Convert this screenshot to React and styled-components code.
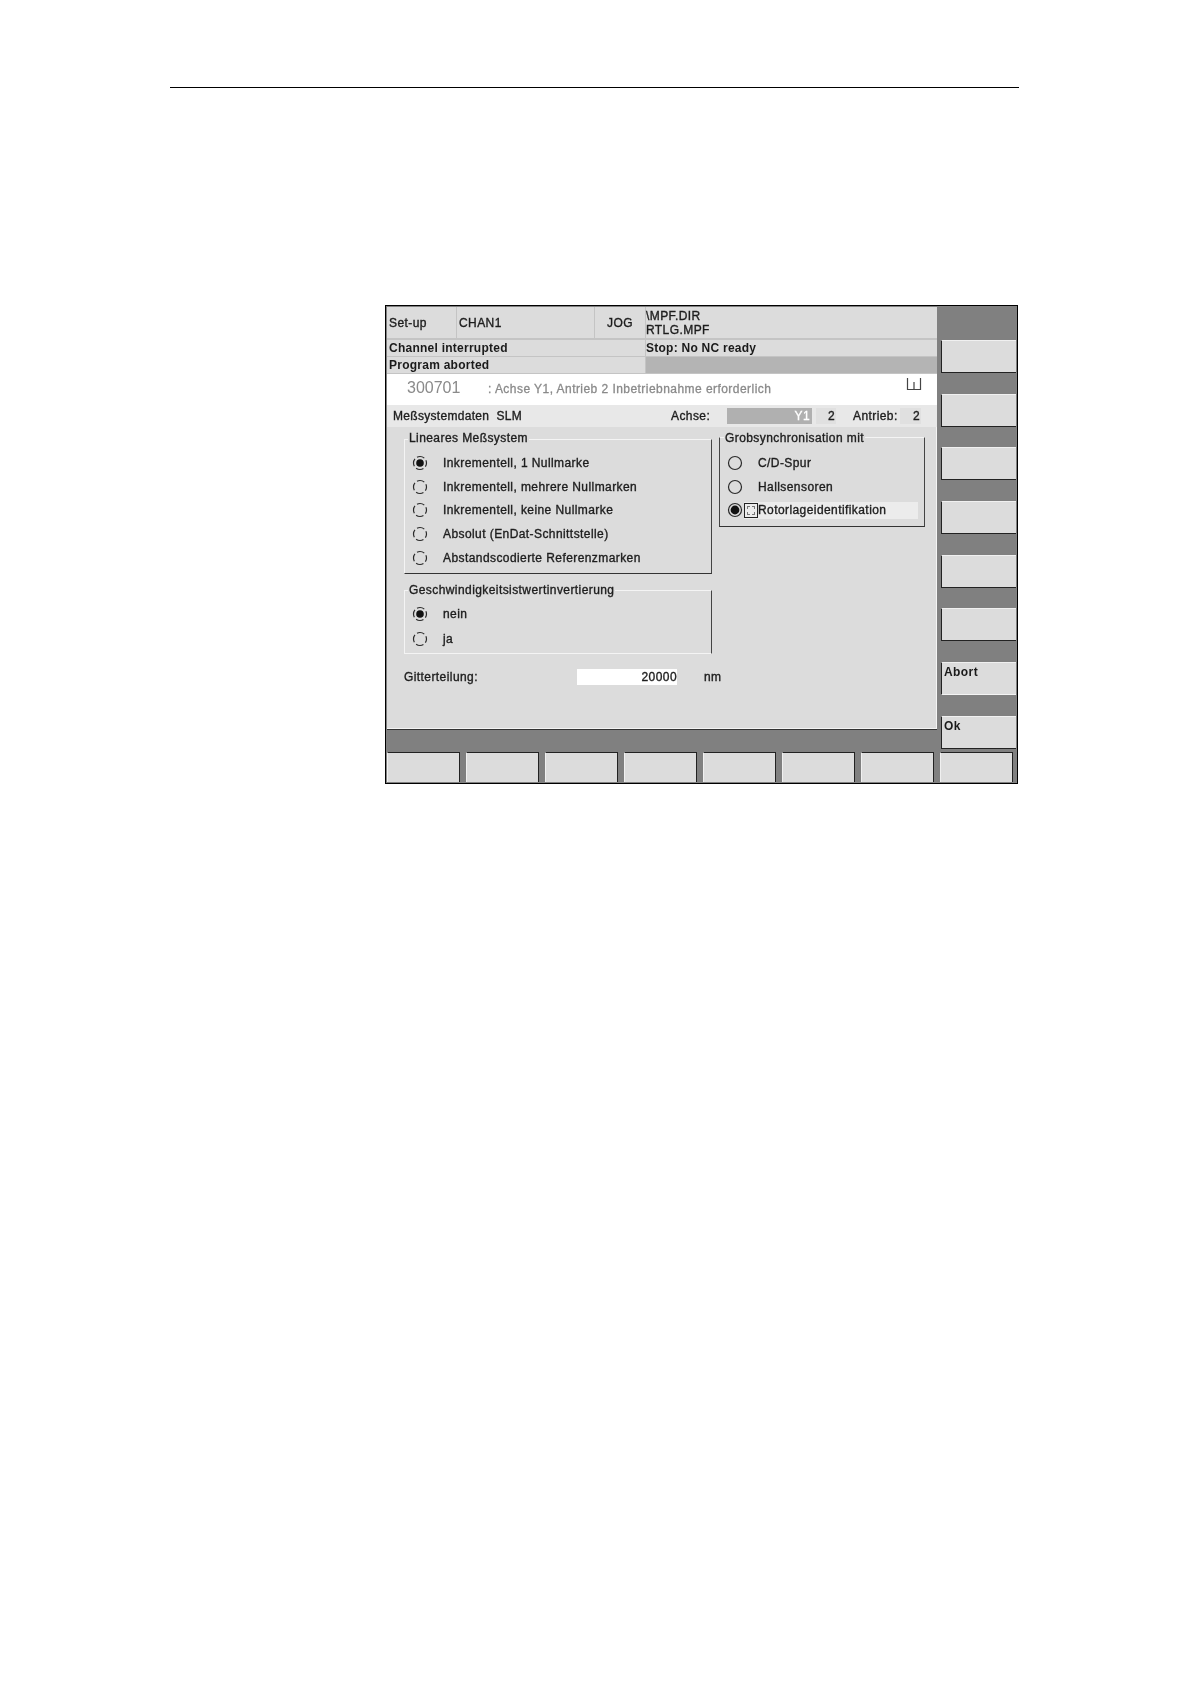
import styled, { createGlobalStyle } from "styled-components";

const Global = createGlobalStyle`
  html, body {
    margin: 0;
    background: #fff;
  }
  body {
    font-family: "Liberation Sans", Arial, sans-serif;
    font-size: 12px;
    color: #1a1a1a;
  }
`;

const Page = styled.div`
  width: 1190px;
  height: 1684px;
  padding: 87px 0 0 170px;
  box-sizing: border-box;
`;

const Rule = styled.div`
  width: 849px;
  height: 1px;
  background: #000;
`;

const Screen = styled.div`
  width: 633px;
  height: 479px;
  margin: 217px 0 0 215px;
  padding: 1px;
  box-sizing: border-box;
  border: 1px solid #000;
  background: #808080;
  filter: blur(0.4px);
  overflow: hidden;
  -webkit-text-stroke: 0.35px #222;
  letter-spacing: 0.42px;
`;

const Top = styled.div`
  display: flex;
  height: 445px;
`;

const Main = styled.div`
  width: 550px;
  display: flex;
  flex-direction: column;
  background: #c4c4c4;
`;

const HeadRow = styled.div`
  display: flex;
  height: ${({ h }) => h}px;
  margin-bottom: ${({ mb }) => mb || 1}px;
  gap: 1px;
`;

const Cell = styled.div`
  width: ${({ w }) => (w ? `${w}px` : "auto")};
  flex: ${({ w }) => (w ? "none" : 1)};
  background: ${({ dark }) => (dark ? "#b4b4b4" : "#dcdcdc")};
  box-sizing: border-box;
  padding: 0 ${({ tight }) => (tight ? 0 : 2)}px;
  display: flex;
  flex-direction: column;
  justify-content: center;
  align-items: ${({ center }) => (center ? "center" : "flex-start")};
  line-height: 14px;
  white-space: nowrap;
  font-weight: ${({ bold }) => (bold ? 700 : 400)};
  -webkit-text-stroke: ${({ bold }) => (bold ? "0" : "0.35px #222")};
  letter-spacing: ${({ bold }) => (bold ? "0.25px" : "0.42px")};
`;

const Alarm = styled.div`
  height: 31px;
  background: #fff;
  display: flex;
  align-items: center;
  position: relative;
  padding-left: 20px;
  color: #8a8a8a;
  -webkit-text-stroke: 0;
`;

const AlarmCode = styled.span`
  font-size: 16px;
  width: 81px;
  letter-spacing: 0;
  margin-bottom: 4px;
`;

const AlarmText = styled.span`
  font-size: 12px;
  letter-spacing: 0.45px;
  -webkit-text-stroke: 0.3px #8a8a8a;
  margin-bottom: 2px;
`;

const BookIcon = styled.svg`
  position: absolute;
  right: 15px;
  top: 3px;
`;

const DataBar = styled.div`
  height: 22px;
  background: #e8e8e8;
  display: flex;
  align-items: center;
  padding-left: 6px;
`;

const DataTitle = styled.span`
  width: 278px;
  white-space: pre;
  letter-spacing: 0.3px;
`;

const DataLabel = styled.span`
  width: ${({ w }) => w}px;
`;

const DataField = styled.span`
  width: ${({ w }) => w}px;
  height: 16px;
  line-height: 16px;
  box-sizing: border-box;
  padding-right: ${({ pr }) => pr || 1}px;
  margin-right: ${({ mr }) => mr || 0}px;
  text-align: right;
  background: ${({ grey }) => (grey ? "#b0b0b0" : "#e0e0e0")};
  color: ${({ grey }) => (grey ? "#fff" : "inherit")};
  -webkit-text-stroke: ${({ grey }) => (grey ? "0.35px #fff" : "0.35px #222")};
`;

const Body = styled.div`
  flex: 1;
  background: #dcdcdc;
  display: flex;
  gap: 7px;
  padding: 10px 0 0 17px;
  border-bottom: 1px solid #f4f4f4;
  border-right: 1px solid #f4f4f4;
`;

const LeftCol = styled.div`
  width: 308px;
  padding-top: 2px;
`;

const RightCol = styled.div`
  width: 206px;
`;

const Group = styled.div`
  position: relative;
  box-sizing: border-box;
  height: ${({ h }) => h}px;
  margin-bottom: ${({ mb }) => mb || 0}px;
  padding-top: ${({ pt }) => pt || 11}px;
  border-top: 1px solid #f4f4f4;
  border-left: 1px solid ${({ darkLeft }) => (darkLeft ? "#444" : "#f4f4f4")};
  border-right: 1px solid #444;
  border-bottom: 1px solid ${({ lightBottom }) => (lightBottom ? "#f4f4f4" : "#333")};
`;

const Legend = styled.span`
  position: absolute;
  top: ${({ t }) => t}px;
  left: ${({ l }) => l}px;
  padding: 0 1px;
  line-height: 13px;
  background: #dcdcdc;
  white-space: nowrap;
`;

const Option = styled.div`
  height: ${({ rh }) => rh || 23.75}px;
  display: flex;
  align-items: center;
  padding-left: ${({ pl }) => pl}px;
  white-space: nowrap;
`;

const OptionText = styled.span`
  margin-left: ${({ ml }) => ml}px;
`;

const Selected = styled.span`
  display: flex;
  align-items: center;
  margin-left: 1px;
  width: 174px;
  height: 17px;
  background: #ececec;
`;

const FocusBox = styled.span`
  width: 14px;
  height: 15px;
  box-sizing: border-box;
  border: 1px solid #222;
  display: flex;
  align-items: center;
  justify-content: center;
  flex: none;
  &::after {
    content: "";
    width: 8px;
    height: 9px;
    box-sizing: border-box;
    border: 1px dashed #777;
  }
`;

const GridRow = styled.div`
  display: flex;
  align-items: center;
  height: 16px;
  margin-top: 15px;
`;

const GridLabel = styled.span`
  width: 173px;
  flex: none;
`;

const GridField = styled.span`
  width: 100px;
  flex: none;
  height: 16px;
  line-height: 16px;
  background: #fff;
  text-align: right;
`;

const Unit = styled.span`
  margin-left: 27px;
  flex: none;
`;

const GreyBar = styled.div`
  height: 23px;
  background: #808080;
  border-top: 1px solid #333;
  box-sizing: border-box;
`;

const Side = styled.div`
  flex: 1;
  display: flex;
  flex-direction: column;
  align-items: flex-end;
  padding-top: 33px;
  gap: 20.7px;
`;

const SideKey = styled.div`
  width: 75px;
  height: 33px;
  box-sizing: border-box;
  background: #dcdcdc;
  border-left: 1px solid #222;
  border-bottom: 1px solid ${({ noEdge }) => (noEdge ? "#f4f4f4" : "#222")};
  border-top: 1px solid #f0f0f0;
  padding: 2px 0 0 2px;
  font-weight: 700;
  -webkit-text-stroke: 0;
  line-height: 14px;
`;

const Bottom = styled.div`
  display: flex;
  gap: 6px;
  height: 30px;
`;

const BottomKey = styled.div`
  width: 73px;
  flex: none;
  box-sizing: border-box;
  background: #dcdcdc;
  border-top: 1px solid #222;
  border-right: 1px solid #222;
  border-left: 1px solid #f0f0f0;
`;

const Radio = ({ checked, full }) => (
  <svg width="16" height="16" viewBox="0 0 16 16" style={{ flex: "none" }}>
    <circle
      cx="8"
      cy="8"
      r="6.5"
      fill="none"
      stroke="#2a2a2a"
      strokeWidth="1.2"
      strokeDasharray={full ? undefined : "7.7 2.5"}
      strokeDashoffset={full ? undefined : "3.85"}
    />
    {checked && <circle cx="8" cy="8" r={full ? 4.4 : 3.8} fill="#111" />}
  </svg>
);

const linear = [
  "Inkrementell, 1 Nullmarke",
  "Inkrementell, mehrere Nullmarken",
  "Inkrementell, keine Nullmarke",
  "Absolut (EnDat-Schnittstelle)",
  "Abstandscodierte Referenzmarken",
];

const App = () => {
  return (
    <Page>
      <Global />
      <Rule />
      <Screen>
        <Top>
          <Main>
            <HeadRow h={31} mb={2}>
              <Cell w={69}>Set-up</Cell>
              <Cell w={137}>CHAN1</Cell>
              <Cell w={50} center>JOG</Cell>
              <Cell tight>
                <span>\MPF.DIR</span>
                <span>RTLG.MPF</span>
              </Cell>
            </HeadRow>
            <HeadRow h={16}>
              <Cell w={258} bold>Channel interrupted</Cell>
              <Cell tight bold>Stop: No NC ready</Cell>
            </HeadRow>
            <HeadRow h={16}>
              <Cell w={258} bold>Program aborted</Cell>
              <Cell dark />
            </HeadRow>
            <Alarm>
              <AlarmCode>300701</AlarmCode>
              <AlarmText>: Achse Y1, Antrieb 2 Inbetriebnahme erforderlich</AlarmText>
              <BookIcon width="16" height="14" viewBox="0 0 16 14">
                <path d="M1.5 1v11.5h13V1M8 5v7.5" fill="none" stroke="#444" strokeWidth="1.2" />
              </BookIcon>
            </Alarm>
            <DataBar>
              <DataTitle>Meßsystemdaten  SLM</DataTitle>
              <DataLabel w={56}>Achse:</DataLabel>
              <DataField w={85} grey pr={2} mr={4}>Y1</DataField>
              <DataField w={20} mr={17}>2</DataField>
              <DataLabel w={47}>Antrieb:</DataLabel>
              <DataField w={21}>2</DataField>
            </DataBar>
            <Body>
              <LeftCol>
                <Group h={135} mb={16}>
                  <Legend t={-8} l={3}>Lineares Meßsystem</Legend>
                  {linear.map((text, i) => (
                    <Option key={text} pl={7}>
                      <Radio checked={i === 0} />
                      <OptionText ml={15}>{text}</OptionText>
                    </Option>
                  ))}
                </Group>
                <Group h={64} lightBottom>
                  <Legend t={-7} l={3}>Geschwindigkeitsistwertinvertierung</Legend>
                  <Option rh={24.5} pl={7}>
                    <Radio checked />
                    <OptionText ml={15}>nein</OptionText>
                  </Option>
                  <Option rh={24.5} pl={7}>
                    <Radio />
                    <OptionText ml={15}>ja</OptionText>
                  </Option>
                </Group>
                <GridRow>
                  <GridLabel>Gitterteilung:</GridLabel>
                  <GridField>20000</GridField>
                  <Unit>nm</Unit>
                </GridRow>
              </LeftCol>
              <RightCol>
                <Group h={90} darkLeft pt={13}>
                  <Legend t={-6} l={4}>Grobsynchronisation mit</Legend>
                  <Option pl={7}>
                    <Radio full />
                    <OptionText ml={15}>C/D-Spur</OptionText>
                  </Option>
                  <Option pl={7}>
                    <Radio full />
                    <OptionText ml={15}>Hallsensoren</OptionText>
                  </Option>
                  <Option pl={7}>
                    <Radio full checked />
                    <Selected>
                      <FocusBox />
                      <span>Rotorlageidentifikation</span>
                    </Selected>
                  </Option>
                </Group>
              </RightCol>
            </Body>
            <GreyBar />
          </Main>
          <Side>
            <SideKey />
            <SideKey />
            <SideKey />
            <SideKey />
            <SideKey />
            <SideKey />
            <SideKey noEdge>Abort</SideKey>
            <SideKey>Ok</SideKey>
          </Side>
        </Top>
        <Bottom>
          {Array.from({ length: 8 }, (_, i) => (
            <BottomKey key={i} />
          ))}
        </Bottom>
      </Screen>
    </Page>
  );
};

export default App;
